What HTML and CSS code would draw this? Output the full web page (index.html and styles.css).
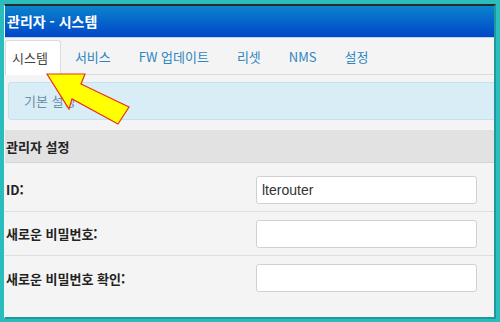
FILE: index.html
```html
<!DOCTYPE html>
<html lang="ko">
<head>
  <meta charset="UTF-8">
  <title>관리자 - 시스템</title>
  <link rel="stylesheet" href="styles.css">
</head>
<body>
  <div class="frame">
    <div class="window">
      <div class="title-bar">관리자 - 시스템</div>

      <div class="tabs">
        <a class="tab active">시스템</a>
        <a class="tab">서비스</a>
        <a class="tab">FW 업데이트</a>
        <a class="tab">리셋</a>
        <a class="tab">NMS</a>
        <a class="tab">설정</a>
      </div>

      <div class="info">기본 설정</div>

      <div class="section-head">관리자 설정</div>

      <div class="row first">
        <label>ID:</label>
        <input type="text" value="lterouter">
      </div>
      <div class="row">
        <label>새로운 비밀번호:</label>
        <input type="password">
      </div>
      <div class="row last">
        <label>새로운 비밀번호 확인:</label>
        <input type="password">
      </div>

      <!-- 안내 화살표 -->
      <svg class="pointer" width="90" height="60" viewBox="0 0 90 60">
        <polygon points="2,2 40,2 36,12 84,35 73,52 27,27 24,37" fill="#ffff00" stroke="#e8321e" stroke-width="1.2" stroke-linejoin="miter"/>
      </svg>
    </div>
  </div>
</body>
</html>
```

FILE: styles.css
```css
* {
  box-sizing: border-box;
}
body {
  margin: 0;
  background-color: #2bbdbd;
  font-family: "Noto Sans CJK KR", "Noto Sans", sans-serif;
}
.frame {
  width: 500px;
  height: 322px;
  padding: 4px 4px 3px 4px;
}
.window {
  position: relative;
  height: 100%;
  background-color: #f4f4f4;
  border-top: 2px solid #2a2a2a;
  border-left: 1px solid #e8f8f8;
  border-right: 2px solid #1e9898;
  border-bottom: 2px solid #1e9898;
  overflow: hidden;
}
.title-bar {
  height: 32px;
  background: linear-gradient(#0a84cc, #0046c8);
  color: white;
  font-size: 14px;
  font-weight: bold;
  line-height: 31px;
  padding-left: 2px;
  border-bottom: 1px solid #b8d4f0;
}
.tabs {
  display: flex;
  height: 37px;
  background-color: #f4f4f4;
  border-bottom: 1px solid #dcdcdc;
  padding-top: 2px;
}
.tab {
  font-size: 13px;
  color: #2e86c1;
  padding: 0 14px 0 14px;
  line-height: 34px;
}
.tab.active {
  background-color: #ffffff;
  color: #444;
  border: 1px solid #dcdcdc;
  border-bottom: none;
  border-radius: 3px 3px 0 0;
  padding: 0 12px 0 6px;
  margin-bottom: -1px;
}
.info {
  margin: 7px 0 10px 3px;
  height: 38px;
  background-color: #d9edf7;
  border: 1px solid #c2e2f0;
  border-right: none;
  border-radius: 4px 0 0 4px;
  color: #6c8fa6;
  font-size: 13px;
  line-height: 36px;
  padding-left: 15px;
}
.section-head {
  height: 33px;
  background-color: #e2e2e2;
  border-bottom: 1px solid #d6d6d6;
  font-size: 13px;
  font-weight: bold;
  color: #222;
  line-height: 33px;
  padding-left: 1px;
}
.row {
  display: flex;
  align-items: center;
  justify-content: space-between;
  height: 44px;
  border-bottom: 1px solid #dedede;
  padding-right: 17px;
}
.row.first {
  height: 49px;
  padding-top: 5px;
}
.row.last {
  border-bottom: none;
}
.row label {
  font-size: 13px;
  font-weight: bold;
  color: #222;
  padding-left: 1px;
}
.row input {
  width: 221px;
  height: 28px;
  border: 1px solid #d0d0d0;
  border-radius: 3px;
  background-color: #ffffff;
  font-family: "Liberation Sans", sans-serif;
  font-size: 14px;
  color: #333;
  padding: 0 5px;
}
.pointer {
  position: absolute;
  left: 40px;
  top: 66px;
}
```
